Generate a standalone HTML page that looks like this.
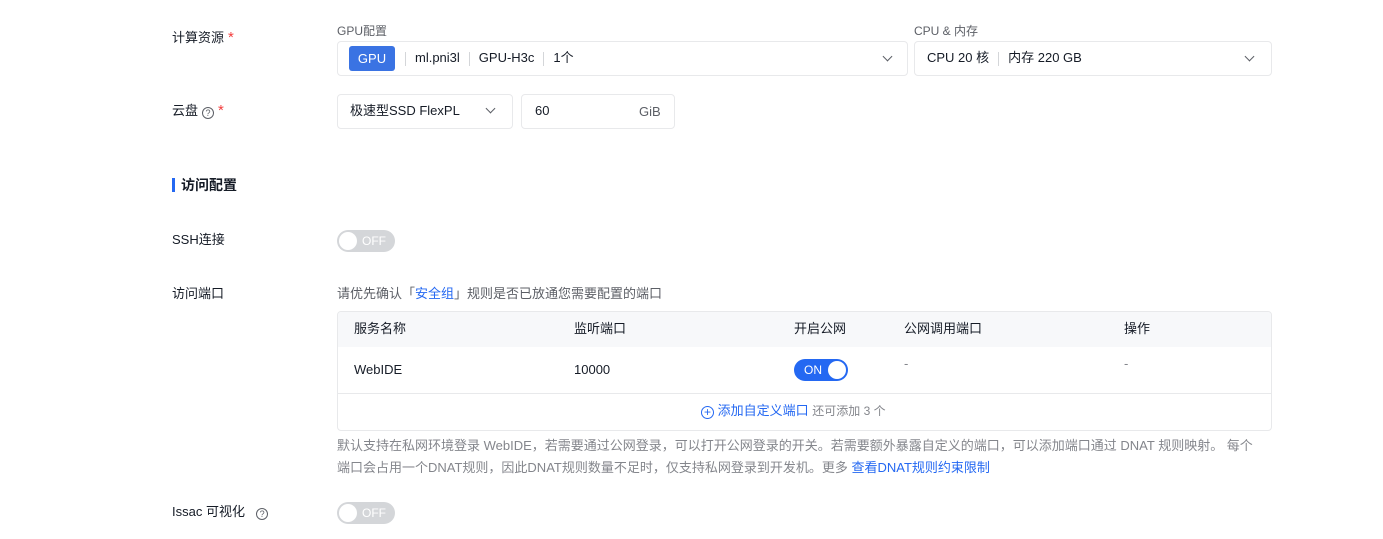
<!DOCTYPE html>
<html><head><meta charset="utf-8"><style>
*{box-sizing:border-box;margin:0;padding:0}
body{width:1383px;height:539px;background:#fff;font-family:"Liberation Sans","Noto Sans CJK SC",sans-serif;font-size:13px;color:#151b26;position:relative;overflow:hidden;line-height:16px}
.a{position:absolute;white-space:nowrap}
.lbl{color:#151b26;font-size:13px}
.star{color:#f33e3e;font-size:15px;margin-left:4px}
.box{position:absolute;border:1px solid #e8e9eb;border-radius:4px;background:#fff}
.sep{display:inline-block;width:1px;height:14px;background:#d4d6d9;vertical-align:middle;margin:0 9px}
.chev{position:absolute;width:7px;height:7px;border-right:1.5px solid #5c5f66;border-bottom:1.5px solid #5c5f66;transform:rotate(45deg)}
.sw{position:absolute;width:58px;height:22px;border-radius:11px;background:#d4d6d9}
.sw i{position:absolute;top:2px;width:18px;height:18px;border-radius:50%;background:#fff}
.sw span{position:absolute;top:3px;font-size:12px;color:#fff}
.q{display:inline-block;width:12px;height:12px;border:1px solid #5c5f66;border-radius:50%;font-size:9px;line-height:10px;text-align:center;color:#5c5f66;vertical-align:-1px;margin-left:4px}
.g{color:#84868c}
.b{color:#2468f2}
</style></head><body>
<div class="a lbl" style="left:172px;top:30px">计算资源<span class="star">*</span></div>
<div class="a" style="left:337px;top:23px;font-size:12px;color:#5c5f66">GPU配置</div>
<div class="a" style="left:914px;top:23px;font-size:12px;color:#5c5f66">CPU &amp; 内存</div>
<div class="box" style="left:337px;top:41px;width:571px;height:35px"></div>
<div class="a" style="left:349px;top:46px;width:46px;height:25px;background:#3a73e3;border-radius:3px;color:#fff;text-align:center;line-height:25px">GPU</div>
<div class="a" style="left:396px;top:50px">
<span class="sep"></span>ml.pni3l<span class="sep"></span>GPU-H3c<span class="sep"></span>1个</div>
<div class="chev" style="left:884px;top:53px"></div>
<div class="box" style="left:914px;top:41px;width:358px;height:35px"></div>
<div class="a" style="left:927px;top:50px">CPU 20 核<span class="sep"></span>内存 220 GB</div>
<div class="chev" style="left:1246px;top:53px"></div>

<div class="a lbl" style="left:172px;top:103px">云盘<span class="q">?</span><span class="star">*</span></div>
<div class="box" style="left:337px;top:94px;width:176px;height:35px"></div>
<div class="a" style="left:350px;top:103px">极速型SSD FlexPL</div>
<div class="chev" style="left:487px;top:105px"></div>
<div class="box" style="left:521px;top:94px;width:154px;height:35px"></div>
<div class="a" style="left:535px;top:103px">60</div>
<div class="a" style="left:639px;top:104px;color:#5c5f66">GiB</div>

<div class="a" style="left:172px;top:178px;width:3px;height:14px;background:#2468f2"></div>
<div class="a" style="left:181px;top:177px;font-size:14px;font-weight:bold">访问配置</div>

<div class="a lbl" style="left:172px;top:232px">SSH连接</div>
<div class="sw" style="left:337px;top:230px;width:58px"><i style="left:2px"></i><span style="left:25px">OFF</span></div>

<div class="a lbl" style="left:172px;top:286px">访问端口</div>
<div class="a" style="left:337px;top:286px;color:#5c5f66">请优先确认「<span class="b">安全组</span>」规则是否已放通您需要配置的端口</div>
<div class="box" style="left:337px;top:311px;width:935px;height:120px;overflow:hidden">
<div style="position:absolute;left:0;top:0;width:100%;height:35px;background:#f7f8fa"></div>
<div style="position:absolute;left:0;top:81px;width:100%;height:1px;background:#e8e9eb"></div>
</div>
<div class="a" style="left:354px;top:321px">服务名称</div>
<div class="a" style="left:574px;top:321px">监听端口</div>
<div class="a" style="left:794px;top:321px">开启公网</div>
<div class="a" style="left:904px;top:321px">公网调用端口</div>
<div class="a" style="left:1124px;top:321px">操作</div>
<div class="a" style="left:354px;top:362px">WebIDE</div>
<div class="a" style="left:574px;top:362px">10000</div>
<div class="sw" style="left:794px;top:359px;width:54px;background:#2468f2"><i style="left:34px"></i><span style="left:10px">ON</span></div>
<div class="a g" style="left:904px;top:356px">-</div>
<div class="a g" style="left:1124px;top:356px">-</div>
<div class="a" style="left:701px;top:403px"><span class="b"><span style="display:inline-block;width:13px;height:13px;border:1.3px solid #2468f2;border-radius:50%;text-align:center;line-height:10px;font-size:12px;vertical-align:-1px">+</span> 添加自定义端口</span> <span class="g" style="font-size:12px">还可添加 3 个</span></div>
<div class="a g" style="left:337px;top:435px;font-size:13px;line-height:22px;white-space:normal;width:924px">默认支持在私网环境登录 WebIDE，若需要通过公网登录，可以打开公网登录的开关。若需要额外暴露自定义的端口，可以添加端口通过 DNAT 规则映射。 每个端口会占用一个DNAT规则，因此DNAT规则数量不足时，仅支持私网登录到开发机。更多 <span class="b">查看DNAT规则约束限制</span></div>

<div class="a lbl" style="left:172px;top:504px">Issac 可视化 &nbsp;<span class="q">?</span></div>
<div class="sw" style="left:337px;top:502px;width:58px"><i style="left:2px"></i><span style="left:25px">OFF</span></div>
</body></html>
